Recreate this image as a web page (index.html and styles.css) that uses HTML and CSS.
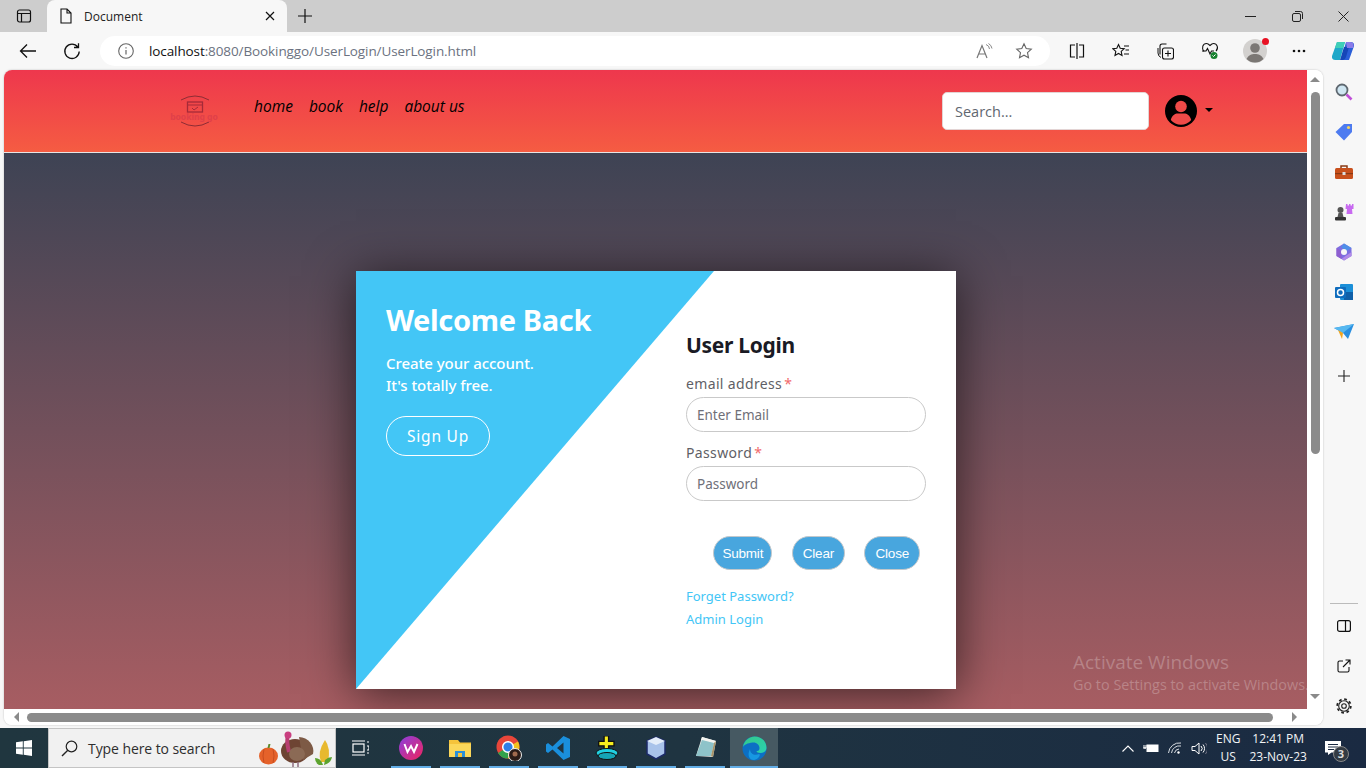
FILE: index.html
```html
<!DOCTYPE html>
<html lang="en">
<head>
  <meta charset="UTF-8" />
  <meta name="viewport" content="width=device-width, initial-scale=1.0"/>
  <title>Document</title>
  <link rel="stylesheet" href="styles.css">
</head>
<body>
  <!-- browser tabs -->
  <div class="tabbar">
    <svg class="tab-actions" width="16" height="16" viewBox="0 0 16 16"><rect x="1.5" y="2" width="13" height="12" rx="2" fill="none" stroke="#111" stroke-width="1.2"/><path d="M1.5 5.5h13M5.500 5.500V14" fill="none" stroke="#111" stroke-width="1.2"/></svg>
    <div class="tab">
      <svg width="14" height="16" viewBox="0 0 14 16"><path d="M2 1h6l4 4v10H2zM8 1v4h4" fill="none" stroke="#111" stroke-width="1.1"/></svg>
      <span class="tab-title">Document</span>
      <svg class="tab-close" width="10" height="10" viewBox="0 0 10 10"><path d="M1 1l8 8M9 1l-8 8" stroke="#111" stroke-width="1.2"/></svg>
    </div>
    <svg class="new-tab" width="14" height="14" viewBox="0 0 14 14"><path d="M7 0v14M0 7h14" stroke="#111" stroke-width="1.2"/></svg>
    <div class="win-controls">
      <svg width="11" height="11" viewBox="0 0 11 11"><path d="M0 5.500h11" stroke="#222"/></svg>
      <svg width="11" height="11" viewBox="0 0 11 11"><rect x="0.500" y="2.500" width="8" height="8" rx="1.500" fill="none" stroke="#222"/><path d="M3 .5h5.500a2 2 0 0 1 2 2V8" fill="none" stroke="#222"/></svg>
      <svg width="11" height="11" viewBox="0 0 11 11"><path d="M.5.500l10 10M10.500.500l-10 10" stroke="#222"/></svg>
    </div>
  </div>

  <!-- address bar -->
  <div class="toolbar">
    <svg class="nav-btn" width="18" height="16" viewBox="0 0 18 16"><path d="M17 8H1.500M8 1.500L1.500 8 8 14.500" fill="none" stroke="#111" stroke-width="1.3"/></svg>
    <svg class="nav-btn reload" width="18" height="18" viewBox="0 0 18 18"><path d="M14.800 5A7.200 7.200 0 1 0 16.200 9.500M15.500 1.200V5.500H11" fill="none" stroke="#111" stroke-width="1.3"/></svg>
    <div class="address">
      <svg width="16" height="16" viewBox="0 0 16 16"><circle cx="8" cy="8" r="7.300" fill="none" stroke="#666" stroke-width="1.100"/><path d="M8 7v4.500M8 4.200v1.400" stroke="#666" stroke-width="1.200"/></svg>
      <span class="url"><b>localhost</b>:8080/Bookinggo/UserLogin/UserLogin.html</span>
      <svg class="addr-right" width="18" height="16" viewBox="0 0 18 16"><path d="M1 15L6 2.500 11 15M2.800 11h6.400" fill="none" stroke="#777" stroke-width="1.200"/><path d="M10 1.500a5 5 0 0 1 3.500 4.500M12.500 .5a7 7 0 0 1 3.500 5" fill="none" stroke="#888"/></svg>
      <svg class="addr-star" width="18" height="18" viewBox="0 0 18 18"><path d="M9 1.800l2.200 4.700 5.100.600-3.800 3.500 1 5.100L9 13.200l-4.500 2.500 1-5.100L1.700 7.100l5.100-.600z" fill="none" stroke="#666" stroke-width="1.100"/></svg>
    </div>
    <div class="tools">
      <svg width="16" height="16" viewBox="0 0 16 16"><path d="M6 2H1.500v12H6M10 2h4.500v12H10M8 0v16" fill="none" stroke="#111" stroke-width="1.200"/></svg>
      <svg width="18" height="16" viewBox="0 0 18 16"><path d="M6.500 1.500l1.700 3.700 4 .5-3 2.700.8 4-3.500-2-3.500 2 .8-4-3-2.700 4-.5zM12 3h5M13.500 7H17M12 11h5" fill="none" stroke="#111" stroke-width="1.100"/></svg>
      <svg width="17" height="17" viewBox="0 0 17 17"><path d="M3 11.500V3a2 2 0 0 1 2-2h4.500" fill="none" stroke="#111" stroke-width="1.100"/><path d="M1 5v5a5 5 0 0 0 3 4.500" fill="none" stroke="#111"/><rect x="5.500" y="5" width="11" height="11" rx="2" fill="none" stroke="#111" stroke-width="1.100"/><path d="M11 7.500v6M8 10.500h6" stroke="#111" stroke-width="1.100"/></svg>
      <svg width="18" height="18" viewBox="0 0 18 18"><path d="M3 9.500C0 6 2 1.500 5.500 1.500 7 1.500 8 2.500 9 3.500c1-1 2-2 3.500-2 3.500 0 5.500 4.500 2.500 7.500" fill="none" stroke="#111" stroke-width="1.100"/><path d="M1 9h4l1.500-2.500L9 12l1.500-3H13" fill="none" stroke="#111" stroke-width="1.100"/><circle cx="13" cy="13.500" r="3.500" fill="#17812f"/><path d="M11.500 13.500l1 1 2-2" fill="none" stroke="#fff"/></svg>
      <div class="avatar">
        <svg width="24" height="24" viewBox="0 0 24 24"><circle cx="12" cy="12" r="12" fill="#d3d1cf"/><circle cx="12" cy="9" r="4.800" fill="#7b7774"/><path d="M3.500 20c2-4 5-5 8.500-5s6.500 1 8.500 5a12 12 0 0 1-17 0z" fill="#7b7774"/></svg>
        <span class="avatar-dot"></span>
      </div>
      <svg width="14" height="4" viewBox="0 0 14 4"><circle cx="2" cy="2" r="1.300" fill="#111"/><circle cx="7" cy="2" r="1.300" fill="#111"/><circle cx="12" cy="2" r="1.300" fill="#111"/></svg>
      <svg width="24" height="24" viewBox="0 0 24 24"><path d="M6 3h8l-5 18H4.500Q.5 21 1 17z" fill="#1fa8c9"/><path d="M18 21h-8l5-18h4.500q4 0 3.500 4z" fill="#2a5fd8"/><path d="M9 21l4-13h5l-3 10q-1 3-3 3z" fill="#1546b8"/><path d="M6 3h8l-2 6H4z" fill="#3fcfb8"/><path d="M15 3h4q4 0 3.500 4L22 9h-6z" fill="#8a7be8"/></svg>
    </div>
  </div>

  <div class="browser-body">
    <div class="viewport">
      <div class="viewport-row">
        <div class="page">
          <header class="site-header">
            <div class="logo">
              <svg width="50" height="36" viewBox="0 0 50 36">
                <path d="M11 7Q25 -1 39 7M11 29Q25 37 39 29" fill="none" stroke="#8d2d35" stroke-width="1"/>
                <rect x="17.500" y="9" width="15" height="10" fill="none" stroke="#a52a38" stroke-width="1.300"/>
                <path d="M18 12h14M22 15l2 2 4-3" fill="none" stroke="#a52a38"/>
              </svg>
              <span class="logo-text">booking go</span>
            </div>
            <nav class="site-nav">
              <a href="#">home</a>
              <a href="#">book</a>
              <a href="#">help</a>
              <a href="#">about us</a>
            </nav>
            <input class="search" type="text" placeholder="Search..." />
            <div class="user-menu">
              <svg width="32" height="32" viewBox="0 0 32 32"><circle cx="16" cy="16" r="16" fill="#000"/><circle cx="16" cy="11.500" r="5.800" fill="#f04a48"/><path d="M5.800 25c1.200-5 4.500-6.500 7-6.500h6.400c2.500 0 5.800 1.500 7 6.500a13.500 13.500 0 0 1-20.400 0z" fill="#f04a48"/></svg>
              <span class="caret"></span>
            </div>
          </header>
          <main class="page-body">
            <div class="modal">
              <div class="modal-bg"></div>
              <section class="welcome">
                <h2>Welcome Back</h2>
                <p>Create your account.<br>It's totally free.</p>
                <a class="signup" href="#">Sign Up</a>
              </section>
              <form class="login">
                <h3>User Login</h3>
                <label for="email">email address<span class="req">*</span></label>
                <input id="email" type="text" placeholder="Enter Email" />
                <label for="password">Password<span class="req">*</span></label>
                <input id="password" type="text" placeholder="Password" />
                <div class="buttons">
                  <button type="button">Submit</button>
                  <button type="button">Clear</button>
                  <button type="button">Close</button>
                </div>
                <a class="link" href="#">Forget Password?</a>
                <a class="link" href="#">Admin Login</a>
              </form>
            </div>
          </main>
        </div>
        <div class="vscroll">
          <span class="arrow-up"></span>
          <span class="vthumb"></span>
          <span class="arrow-down"></span>
        </div>
        <div class="activate">
          <div class="activate-title">Activate Windows</div>
          <div class="activate-sub">Go to Settings to activate Windows.</div>
        </div>
      </div>
      <div class="hscroll">
        <span class="arrow-left"></span>
        <span class="hthumb"></span>
        <span class="arrow-right"></span>
      </div>
    </div>

    <!-- edge sidebar -->
    <aside class="sidebar">
      <svg width="18" height="18" viewBox="0 0 18 18"><circle cx="7" cy="7" r="5.500" fill="#cfe6f2" stroke="#5f6870" stroke-width="1.800"/><path d="M11.500 11.500L16.500 16.500" stroke="#c04fd8" stroke-width="2.600"/></svg>
      <svg width="18" height="18" viewBox="0 0 18 18"><path d="M9 1h8v8l-8 8.500L.5 9z" fill="#4d7bf0"/><circle cx="13.500" cy="4.500" r="1.600" fill="#f4d35e"/></svg>
      <svg width="18" height="16" viewBox="0 0 18 16"><path d="M6 4V2h6v2" fill="none" stroke="#8a3a14" stroke-width="1.500"/><rect y="4" width="18" height="11" rx="1.500" fill="#c8501c"/><rect y="9" width="18" height="1.200" fill="#8a3a14"/><rect x="7.500" y="8" width="3" height="3" fill="#ddd"/></svg>
      <svg width="20" height="18" viewBox="0 0 20 18"><circle cx="6.500" cy="7" r="3" fill="#555"/><path d="M4.500 10h4l1 4H3.500z" fill="#555"/><rect x="1" y="14" width="11" height="3.500" rx="1" fill="#333"/><path d="M12 1h1.500v1.500H15V1h1.500v1.500H18V1h1.500v5H18l.5 5h-6l.5-5h-1.500z" fill="#c86af0"/></svg>
      <svg width="18" height="18" viewBox="0 0 18 18"><path d="M9 .5l7.500 4.500v8L9 17.500 1.500 13V5z" fill="#7d6ee0"/><path d="M9 .5l7.500 4.500-5 3L6 4z" fill="#4f8fe8"/><path d="M1.500 5v8l5 3V8z" fill="#8f5fd0"/><path d="M16.500 9v4L9 17.500l-2-2z" fill="#b28ae8"/><circle cx="9" cy="9" r="3" fill="#f7f7f7"/></svg>
      <svg width="18" height="18" viewBox="0 0 18 18"><rect x="5" y="1" width="13" height="16" rx="1" fill="#1b8fd8"/><rect x="9" y="9" width="9" height="8" fill="#0f5fa8"/><rect y="4" width="11" height="11" rx="1" fill="#0f6cbd"/><circle cx="5.500" cy="9.500" r="3" fill="none" stroke="#fff" stroke-width="1.500"/></svg>
      <svg width="20" height="16" viewBox="0 0 20 16"><path d="M0 4L20 0 14 15 9 9z" fill="#2a8fe0"/><path d="M0 4l20-4L9 9z" fill="#56b8f0"/><path d="M4 6L9 9l-1 6z" fill="#f2a51e"/></svg>
      <svg class="side-plus" width="12" height="12" viewBox="0 0 12 12"><path d="M6 0v12M0 6h12" stroke="#222" stroke-width="1.100"/></svg>
      <div class="side-bottom">
        <span class="side-rule"></span>
        <svg width="14" height="12" viewBox="0 0 14 12"><rect x=".6" y=".6" width="12.800" height="10.800" rx="2" fill="none" stroke="#111" stroke-width="1.200"/><path d="M8.500 .6v10.800" stroke="#111" stroke-width="1.200"/></svg>
        <svg width="14" height="14" viewBox="0 0 14 14"><path d="M6 2H2.500A1.500 1.500 0 0 0 1 3.500v8A1.500 1.500 0 0 0 2.500 13h8a1.500 1.500 0 0 0 1.500-1.500V8M6 8l7-7M8.500 1H13v4.500" fill="none" stroke="#111" stroke-width="1.100"/></svg>
        <svg width="16" height="16" viewBox="0 0 16 16"><circle cx="8" cy="8" r="2.300" fill="none" stroke="#222" stroke-width="1.100"/><circle cx="8" cy="8" r="5.300" fill="none" stroke="#222" stroke-width="1.100"/><circle cx="8" cy="8" r="6.800" fill="none" stroke="#222" stroke-width="1.800" stroke-dasharray="2.700 2.640"/></svg>
      </div>
    </aside>
  </div>

  <!-- windows taskbar -->
  <footer class="taskbar">
    <div class="start">
      <svg width="16" height="16" viewBox="0 0 16 16"><path d="M0 2.300l6.800-1v6.200H0zM7.700 1.200L16 0v7.500H7.700zM0 8.500h6.800v6.200l-6.800-1zM7.700 8.500H16V16l-8.300-1.200z" fill="#fff"/></svg>
    </div>
    <div class="task-search">
      <svg width="17" height="17" viewBox="0 0 17 17"><circle cx="10.500" cy="6.500" r="5.300" fill="none" stroke="#222" stroke-width="1.200"/><path d="M6.800 10.300L1 16" stroke="#222" stroke-width="1.400"/></svg>
      <span class="task-search-text">Type here to search</span>
      <svg class="doodle" width="76" height="38" viewBox="0 0 76 38">
        <ellipse cx="9.500" cy="26" rx="9.500" ry="8.500" fill="#e5622a"/><path d="M5 19q-2 7 0 14M14 19q2 7 0 14" fill="none" stroke="#c94c1e"/><path d="M8.500 18l1-4h2l-1 4z" fill="#5f8a2c"/>
        <g transform="translate(2 0)"><ellipse cx="34" cy="21" rx="14" ry="12" fill="#6e4433"/><path d="M38 7a15 14 0 0 1 14 17l-10 6z" fill="#7d5a45"/><path d="M28 22q-3-12-1-17" fill="none" stroke="#b83e72" stroke-width="4"/><circle cx="27" cy="5" r="3.500" fill="#c93f80"/><ellipse cx="36" cy="24" rx="8" ry="7" fill="#8b6a55"/><path d="M32 32v5M37 32v5" stroke="#8f6f80" stroke-width="1.500"/></g>
        <path d="M62 32q-4-10 4-22 6 8 3 22z" fill="#e8b92f"/><path d="M56 28q6 0 8 7h-4q-4-2-4-7zM73 27q-1 6-8 8l1-5q3-3 7-3z" fill="#5ca32e"/>
      </svg>
    </div>
    <svg class="task-view" width="18" height="16" viewBox="0 0 18 16"><rect x="2" y="4" width="11" height="8" fill="none" stroke="#fff" stroke-width="1.200"/><path d="M1 1h13M1 15h13M16 2h2M16 6h2v4h-2M16 13h2" fill="none" stroke="#fff" stroke-width="1.200"/></svg>
    <div class="task-apps">
      <div class="app on"><svg width="24" height="24" viewBox="0 0 24 24"><defs><linearGradient id="wps" x1="0" y1="0" x2="1" y2="1"><stop offset="0" stop-color="#8a3fe0"/><stop offset="1" stop-color="#f0245e"/></linearGradient></defs><circle cx="12" cy="12" r="12" fill="url(#wps)"/><path d="M5.500 8l3 8 3.500-6 3 6 3.500-8" fill="none" stroke="#fff" stroke-width="2"/></svg></div>
      <div class="app on"><svg width="22" height="19" viewBox="0 0 22 19"><path d="M0 1h9l2 2.500h11V18H0z" fill="#f5c33b"/><rect y="5" width="22" height="13" fill="#fbd75a"/><rect x="6" y="12" width="10" height="6" fill="#2a8fd8"/><rect x="9" y="14" width="4" height="4" fill="#f5c33b"/></svg></div>
      <div class="app on"><svg width="26" height="26" viewBox="0 0 26 26"><circle cx="12" cy="12" r="11.500" fill="#e8463a"/><path d="M12 12L22 6.500A11.500 11.500 0 0 1 12 23.500z" fill="#f2c21f"/><path d="M12 12v11.500A11.500 11.500 0 0 1 2 18z" fill="#31a24c"/><circle cx="12" cy="12" r="5.300" fill="#2f7fe8" stroke="#fff" stroke-width="1.500"/><circle cx="19" cy="20" r="6.500" fill="#2a1c18" stroke="#eee"/><circle cx="19" cy="19" r="2.500" fill="#a06b4f"/></svg></div>
      <div class="app on"><svg width="24" height="24" viewBox="0 0 24 24"><path d="M17.500 0L24 3v18l-6.500 3L6.500 13.500 2 17l-2-1.500v-7L2 7l4.500 3.500zM17.500 6.500L11 12l6.500 5.500z" fill="#1a8fdc"/></svg></div>
      <div class="app on"><svg width="24" height="24" viewBox="0 0 24 24"><path d="M9 1h5v6h6v5h-6v5H9v-5H3V7h6z" transform="translate(1 -1) scale(.9)" fill="#f7ee1e" stroke="#111" stroke-width="1.500"/><ellipse cx="12" cy="17" rx="11" ry="4.500" fill="#21cfe0" stroke="#111"/><ellipse cx="12" cy="20" rx="9" ry="3.500" fill="#15a5b5" stroke="#111"/></svg></div>
      <div class="app on"><svg width="22" height="24" viewBox="0 0 22 24"><path d="M11 1l9 4v13l-9 5-9-5V5z" fill="#a9c3ea" stroke="#1c2a68" stroke-width="1.500"/><path d="M11 1l9 4-9 4-9-4z" fill="#e4edf9"/></svg></div>
      <div class="app on"><svg width="24" height="24" viewBox="0 0 24 24"><path d="M9 1l14 4-3 16-17-1z" fill="#e6e8e4"/><path d="M9 1l14 4-1 3L8 4z" fill="#f4f4f0"/><path d="M9 4l12 3-3 13H3z" fill="#8ec3c9"/><path d="M21 7l2-2-3 16-2-1z" fill="#a8946a"/></svg></div>
      <div class="app on active"><svg width="25" height="25" viewBox="0 0 25 25"><defs><linearGradient id="edge" x1="0" y1="0" x2="1" y2="1"><stop offset="0" stop-color="#33c88a"/><stop offset="1" stop-color="#2bd0b0"/></linearGradient></defs><circle cx="12.500" cy="12.500" r="12" fill="#0c6fc4"/><path d="M1 11C2 4 8 .5 12.500 .5 20 .5 24.500 6 24.500 12c0 3-3 5-6 5-2.500 0-4-1-4-2 2 .5 3-1 3-3 0-3-3-6-7-5.500C5.500 7 2 9 1 11z" fill="url(#edge)"/><path d="M8 13c0 5 5 7 9 5 2 0 0 5-5 6-5 0-7-5-4-11z" fill="#1798e2"/></svg></div>
    </div>
    <div class="tray">
      <svg width="12" height="7" viewBox="0 0 12 7"><path d="M.5 6.500L6 1l5.500 5.500" fill="none" stroke="#fff" stroke-width="1.100"/></svg>
      <svg width="16" height="10" viewBox="0 0 16 10"><rect x="3.500" y="1.500" width="12" height="7.500" fill="#fff"/><path d="M0 5h3M1 2v3h2V2" fill="none" stroke="#fff"/></svg>
      <svg width="14" height="12" viewBox="0 0 14 12"><path d="M.5 11A11 11 0 0 1 13 1M3.500 11A8 8 0 0 1 13 4M6.500 11A5 5 0 0 1 11 7" fill="none" stroke="#d8dde2"/><circle cx="10.500" cy="10.500" r="1.200" fill="#fff"/></svg>
      <svg width="16" height="13" viewBox="0 0 16 13"><path d="M1 4.500h3L8 1v11L4 8.500H1z" fill="none" stroke="#fff"/><path d="M10 4a3.500 3.500 0 0 1 0 5M12 2.500a6 6 0 0 1 0 8" fill="none" stroke="#fff"/><path d="M14.500 1a9 9 0 0 1 0 11" fill="none" stroke="#778"/></svg>
    </div>
    <div class="tray-text lang">ENG<br>US</div>
    <div class="tray-text clock">12:41 PM<br>23-Nov-23</div>
    <div class="notify">
      <svg width="16" height="14" viewBox="0 0 16 14"><path d="M0 0h16v11.500H6.500L3 14v-2.500H0z" fill="#fff"/><path d="M3 3.500h10M3 6h10M3 8.500h6" stroke="#1a2a42"/></svg>
      <span class="notify-count">3</span>
    </div>
  </footer>
</body>
</html>
```

FILE: styles.css
```css
* {
  box-sizing: border-box;
}
body {
  margin: 0;
  width: 1366px;
  height: 768px;
  overflow: hidden;
  display: flex;
  flex-direction: column;
  font-family: "Noto Sans", sans-serif;
  background: #f7f7f7;
  color: #111;
}

/* tabs */
.tabbar {
  height: 32px;
  flex: none;
  display: flex;
  align-items: center;
  background: #cdcdcd;
}
.tab-actions {
  margin-left: 16px;
}
.tab {
  width: 240px;
  height: 32px;
  margin-left: 15px;
  padding: 0 12px;
  display: flex;
  align-items: center;
  background: #f7f7f7;
  border-radius: 8px 8px 0 0;
  align-self: flex-end;
}
.tab-title {
  margin-left: 11px;
  flex: 1;
  font-family: "Open Sans", sans-serif;
  font-size: 12px;
  color: #222;
}
.new-tab {
  margin-left: 11px;
}
.win-controls {
  margin-left: auto;
  width: 121px;
  padding-right: 17px;
  display: flex;
  justify-content: space-between;
}

/* address bar */
.toolbar {
  height: 38px;
  flex: none;
  display: flex;
  align-items: center;
  background: #f7f7f7;
  padding-left: 19px;
}
.reload {
  margin-left: 26px;
}
.address {
  width: 950px;
  height: 30px;
  margin-left: 19px;
  padding: 0 17px 0 18px;
  display: flex;
  align-items: center;
  background: #fff;
  border-radius: 15px;
}
.url {
  margin-left: 15px;
  flex: 1;
  font-family: "Open Sans", sans-serif;
  font-size: 13.500px;
  letter-spacing: -0.1px;
  color: #6b7280;
}
.url b {
  font-weight: 400;
  color: #111;
}
.addr-star {
  margin-left: 21px;
}
.tools {
  flex: 1;
  display: grid;
  grid-template-columns: repeat(7, 44.330px);
  align-items: center;
  justify-items: center;
  padding-left: 5px;
}
.avatar {
  position: relative;
  height: 24px;
  margin-left: 2px;
}
.avatar-dot {
  position: absolute;
  top: -1px;
  right: -2px;
  width: 7px;
  height: 7px;
  border-radius: 50%;
  background: #e81123;
}

/* browser content */
.browser-body {
  height: 658px;
  flex: none;
  display: flex;
  padding-left: 4px;
}
.viewport {
  width: 1319px;
  height: 655px;
  display: flex;
  flex-direction: column;
  background: #fff;
  border-radius: 8px 8px 8px 8px;
  overflow: hidden;
  box-shadow: 0 0 2px rgba(0, 0, 0, 0.25);
}
.viewport-row {
  position: relative;
  height: 639px;
  display: flex;
}
.page {
  width: 1303px;
  display: flex;
  flex-direction: column;
}

.site-header {
  height: 83px;
  flex: none;
  display: flex;
  align-items: flex-start;
  padding-left: 166px;
  background: linear-gradient(#ee374d, #f55c42);
  border-bottom: 1px solid #e9e4e4;
}
.logo {
  position: relative;
  width: 50px;
  height: 36px;
  margin-top: 23px;
}
.logo-text {
  position: absolute;
  left: 0;
  top: 20px;
  width: 48px;
  font-size: 8.500px;
  font-weight: 700;
  line-height: 8px;
  text-align: center;
  white-space: nowrap;
  color: #e0404a;
}
.site-nav {
  display: flex;
  gap: 16px;
  margin: 25px 0 0 34px;
}
.site-nav a {
  font-family: "Open Sans", sans-serif;
  font-style: italic;
  font-size: 15.500px;
  line-height: 22px;
  color: #000;
  text-decoration: none;
}
.search {
  width: 207px;
  height: 38px;
  margin: 22px 0 0 auto;
  padding: 0 12px;
  font-family: "Open Sans", sans-serif;
  font-size: 14.500px;
  color: #495057;
  background: #fff;
  border: 1px solid #e3d4d4;
  border-radius: 5px;
}
.search::placeholder {
  color: #5f6770;
}
.user-menu {
  display: flex;
  align-items: center;
  gap: 8px;
  margin: 25px 94px 0 16px;
}
.caret {
  width: 0;
  height: 0;
  margin-bottom: 2px;
  border-left: 4px solid transparent;
  border-right: 4px solid transparent;
  border-top: 4px solid #000;
}

.page-body {
  flex: 1;
  display: flex;
  justify-content: center;
  align-items: flex-start;
  padding: 118px 0 0 1px;
  background: linear-gradient(#3e4354, #a75d62);
  overflow: hidden;
}
.modal {
  position: relative;
  width: 600px;
  height: 418px;
  display: flex;
  background: #fff;
  box-shadow: 0 5px 45px rgba(0, 0, 0, 0.62);
}
.modal-bg {
  position: absolute;
  inset: 0;
  background: #43c6f6;
  clip-path: polygon(0 0, 358px 0, 0 100%);
}
.welcome {
  position: relative;
  width: 330px;
  padding: 29px 0 0 30px;
  color: #fff;
}
.welcome h2 {
  margin: 0;
  font-size: 29px;
  line-height: 40px;
  font-weight: 700;
  letter-spacing: -0.35px;
}
.welcome p {
  margin: 12px 0 20px;
  font-size: 15px;
  line-height: 22px;
  font-weight: 500;
  letter-spacing: -0.05px;
}
.signup {
  display: block;
  width: 104px;
  height: 40px;
  border: 1px solid #fff;
  border-radius: 20px;
  font-size: 15.500px;
  line-height: 38px;
  letter-spacing: 0.8px;
  text-align: center;
  color: #fff;
  text-decoration: none;
}
.login {
  position: relative;
  width: 240px;
  padding-top: 59px;
  display: flex;
  flex-direction: column;
}
.login h3 {
  margin: 0 0 14px;
  font-size: 21px;
  line-height: 30px;
  font-weight: 700;
  letter-spacing: -0.3px;
  color: #1a1a24;
}
.login label {
  font-size: 14px;
  line-height: 20px;
  color: #5f5f66;
  letter-spacing: 0.35px;
}
.req {
  margin-left: 2px;
  color: #f26a6a;
}
.login input {
  width: 240px;
  height: 35px;
  margin: 3px 0 11px;
  padding: 0 10px;
  font-family: "Noto Sans", sans-serif;
  font-size: 13.500px;
  border: 1px solid #c9c9c9;
  border-radius: 18px;
  background: #fff;
}
.login input::placeholder {
  color: #6f6f78;
}
.login input:last-of-type {
  margin-bottom: 0;
}
.buttons {
  display: flex;
  justify-content: flex-end;
  gap: 19.500px;
  padding-right: 6px;
  margin: 35px 0 15px;
}
.buttons button {
  height: 34px;
  padding: 0 10px;
  font-family: "Liberation Sans", sans-serif;
  font-size: 13.500px;
  letter-spacing: -0.2px;
  color: #fff;
  background: #48a6de;
  border: 1px solid #c2c8cc;
  border-radius: 17px;
}
.buttons button:first-child {
  padding: 0 8px;
}
.link {
  font-size: 13px;
  line-height: 23px;
  color: #43c6f6;
  text-decoration: none;
}

.activate {
  position: absolute;
  left: 1069px;
  top: 579px;
  white-space: nowrap;
  font-family: "Open Sans", sans-serif;
  color: rgba(255, 255, 255, 0.25);
}
.activate-title {
  font-size: 19px;
  line-height: 26px;
}
.activate-sub {
  font-size: 14.400px;
  line-height: 20px;
}

/* scrollbars */
.vscroll {
  width: 16px;
  display: flex;
  flex-direction: column;
  align-items: center;
  padding-top: 7px;
  background: #fff;
}
.arrow-up,
.arrow-down {
  width: 0;
  height: 0;
  border-left: 5px solid transparent;
  border-right: 5px solid transparent;
}
.arrow-up {
  border-bottom: 5px solid #8a8a8a;
}
.arrow-down {
  margin-top: auto;
  margin-bottom: 10px;
  border-top: 5px solid #8a8a8a;
}
.vthumb {
  width: 9px;
  height: 362px;
  margin-top: 10px;
  border-radius: 5px;
  background: #8b8b8b;
}
.hscroll {
  height: 16px;
  display: flex;
  align-items: center;
  padding-left: 10px;
  background: #fff;
}
.arrow-left,
.arrow-right {
  width: 0;
  height: 0;
  border-top: 5px solid transparent;
  border-bottom: 5px solid transparent;
}
.arrow-left {
  border-right: 5px solid #8a8a8a;
}
.arrow-right {
  margin-left: 19px;
  border-left: 5px solid #8a8a8a;
}
.hthumb {
  width: 1246px;
  height: 9px;
  margin-left: 8px;
  border-radius: 5px;
  background: #8b8b8b;
}

/* edge sidebar */
.sidebar {
  width: 42px;
  display: flex;
  flex-direction: column;
  align-items: center;
  gap: 22px;
  padding-top: 13px;
}
.sidebar svg {
  height: 18px;
}
.side-plus {
  margin-top: 4px;
}
.side-bottom {
  margin-top: auto;
  margin-bottom: 13px;
  display: flex;
  flex-direction: column;
  align-items: center;
  gap: 22px;
}
.side-rule {
  width: 28px;
  height: 1px;
  margin-bottom: -9px;
  background: #bbb;
}

/* taskbar */
.taskbar {
  height: 40px;
  flex: none;
  display: flex;
  align-items: center;
  color: #fff;
  background: linear-gradient(90deg, #20363f, #1f3441 50%, #1a2a42);
}
.start {
  width: 48px;
  display: flex;
  justify-content: center;
}
.task-search {
  position: relative;
  width: 288px;
  height: 40px;
  padding-left: 12px;
  display: flex;
  align-items: center;
  background: #f1f1f1;
  border: 1px solid #c4c4c4;
}
.task-search-text {
  margin-left: 10px;
  font-family: "Open Sans", sans-serif;
  font-size: 14px;
  letter-spacing: -0.08px;
  color: #2e2e2e;
}
.doodle {
  position: absolute;
  right: 0;
  top: 1px;
}
.task-view {
  margin-left: 15px;
}
.task-apps {
  display: flex;
  gap: 1px;
  margin-left: 18px;
}
.app {
  width: 48px;
  height: 40px;
  display: flex;
  align-items: center;
  justify-content: center;
  position: relative;
}
.app.on::after {
  content: "";
  position: absolute;
  left: 4px;
  right: 4px;
  bottom: 0;
  height: 2px;
  background: #62ade6;
}
.app.active {
  background: #465962;
}
.app.active::after {
  left: 0;
  right: 0;
}
.tray {
  display: flex;
  align-items: center;
  gap: 9px;
  margin-left: 344px;
}
.tray-text {
  font-family: "Open Sans", sans-serif;
  font-size: 12px;
  line-height: 18px;
  text-align: center;
  color: #f2f4f6;
}
.lang {
  margin-left: 9px;
}
.clock {
  margin-left: 9px;
}
.notify {
  position: relative;
  margin-left: 18px;
  display: flex;
}
.notify-count {
  position: absolute;
  left: 8px;
  top: 5px;
  width: 16px;
  height: 16px;
  border-radius: 50%;
  font-size: 11px;
  font-weight: 700;
  line-height: 14px;
  text-align: center;
  color: #ddd;
  background: #333b44;
  border: 1px solid #888;
}
```
